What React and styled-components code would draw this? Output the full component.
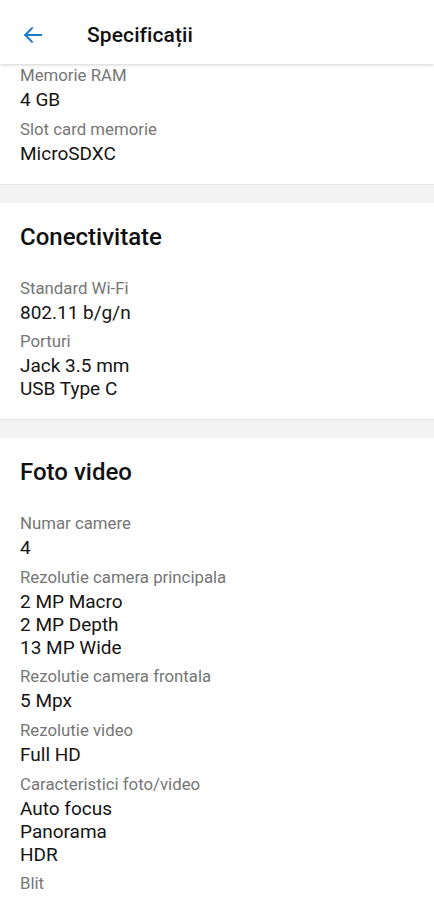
import React from 'react';
import styled, { createGlobalStyle } from 'styled-components';

const GlobalStyle = createGlobalStyle`
  html, body {
    margin: 0;
    padding: 0;
    background: #ffffff;
    overflow: hidden;
  }
  body {
    font-family: Roboto, "Noto Sans", "Liberation Sans", sans-serif;
    -webkit-font-smoothing: antialiased;
  }
`;

const Screen = styled.div`
  width: 434px;
  height: 900px;
  overflow: hidden;
  background: #ffffff;
  display: flex;
  flex-direction: column;
`;

const Header = styled.header`
  position: relative;
  z-index: 2;
  flex: 0 0 auto;
  height: 64px;
  padding-top: 6px;
  box-sizing: border-box;
  display: flex;
  align-items: center;
  background: #ffffff;
  box-shadow: 0 1px 3px rgba(0, 0, 0, 0.12), 0 2px 2px rgba(0, 0, 0, 0.04);
`;

const BackButton = styled.button`
  width: 68px;
  height: 56px;
  padding: 0 0 0 22px;
  border: 0;
  background: transparent;
  display: flex;
  align-items: center;
  cursor: pointer;
  color: #1a7ad0;
`;

const Title = styled.h1`
  margin: 0 0 0 19px;
  font-size: 21px;
  font-weight: 500;
  color: #111111;
  letter-spacing: 0.1px;
`;

const Content = styled.main`
  flex: 1 1 auto;
  overflow: hidden;
`;

/* the first section is scrolled, its heading is out of view */
const Section = styled.section`
  padding: ${p => (p.$partial ? '0' : '19px')} 20px 19px;
  background: #ffffff;
`;

const SectionTitle = styled.h2`
  margin: 0 0 25px;
  font-size: 24px;
  line-height: 30px;
  font-weight: 500;
  color: #111111;
`;

const SpecList = styled.dl`
  margin: 0;
  display: flex;
  flex-direction: column;
  gap: 6.6px;
`;

const Spec = styled.div`
  display: flex;
  flex-direction: column;
  gap: 2px;
`;

const Label = styled.dt`
  font-size: 16.8px;
  line-height: 22px;
  color: #767676;
`;

const Value = styled.dd`
  margin: 0;
  font-size: 19px;
  line-height: 23px;
  color: #141414;
`;

const Divider = styled.div`
  height: 18px;
  background: #f3f3f3;
  border-top: 1px solid #e9e9e9;
`;

const BackArrow = () => (
  <svg width="22" height="22" viewBox="0 0 24 24" fill="none" stroke="currentColor"
    strokeWidth="2.2" strokeLinecap="round" strokeLinejoin="round">
    <path d="M21 12H3.5" />
    <path d="M11 4.5L3.5 12l7.5 7.5" />
  </svg>
);

const sections = [
  {
    partial: true,
    specs: [
      { label: 'Memorie RAM', values: ['4 GB'] },
      { label: 'Slot card memorie', values: ['MicroSDXC'] },
    ],
  },
  {
    title: 'Conectivitate',
    specs: [
      { label: 'Standard Wi-Fi', values: ['802.11 b/g/n'] },
      { label: 'Porturi', values: ['Jack 3.5 mm', 'USB Type C'] },
    ],
  },
  {
    title: 'Foto video',
    specs: [
      { label: 'Numar camere', values: ['4'] },
      { label: 'Rezolutie camera principala', values: ['2 MP Macro', '2 MP Depth', '13 MP Wide'] },
      { label: 'Rezolutie camera frontala', values: ['5 Mpx'] },
      { label: 'Rezolutie video', values: ['Full HD'] },
      { label: 'Caracteristici foto/video', values: ['Auto focus', 'Panorama', 'HDR'] },
      { label: 'Blit', values: [] },
    ],
  },
];

export default function App() {
  return (
    <>
      <GlobalStyle />
      <Screen>
        <Header>
          <BackButton aria-label="Înapoi">
            <BackArrow />
          </BackButton>
          <Title>Specificații</Title>
        </Header>
        <Content>
          {sections.map((section, i) => (
            <React.Fragment key={i}>
              {i > 0 && <Divider />}
              <Section $partial={section.partial}>
                {section.title && <SectionTitle>{section.title}</SectionTitle>}
                <SpecList>
                  {section.specs.map(spec => (
                    <Spec key={spec.label}>
                      <Label>{spec.label}</Label>
                      {spec.values.length > 0 && (
                        <Value>
                          {spec.values.map(v => (
                            <div key={v}>{v}</div>
                          ))}
                        </Value>
                      )}
                    </Spec>
                  ))}
                </SpecList>
              </Section>
            </React.Fragment>
          ))}
        </Content>
      </Screen>
    </>
  );
}
